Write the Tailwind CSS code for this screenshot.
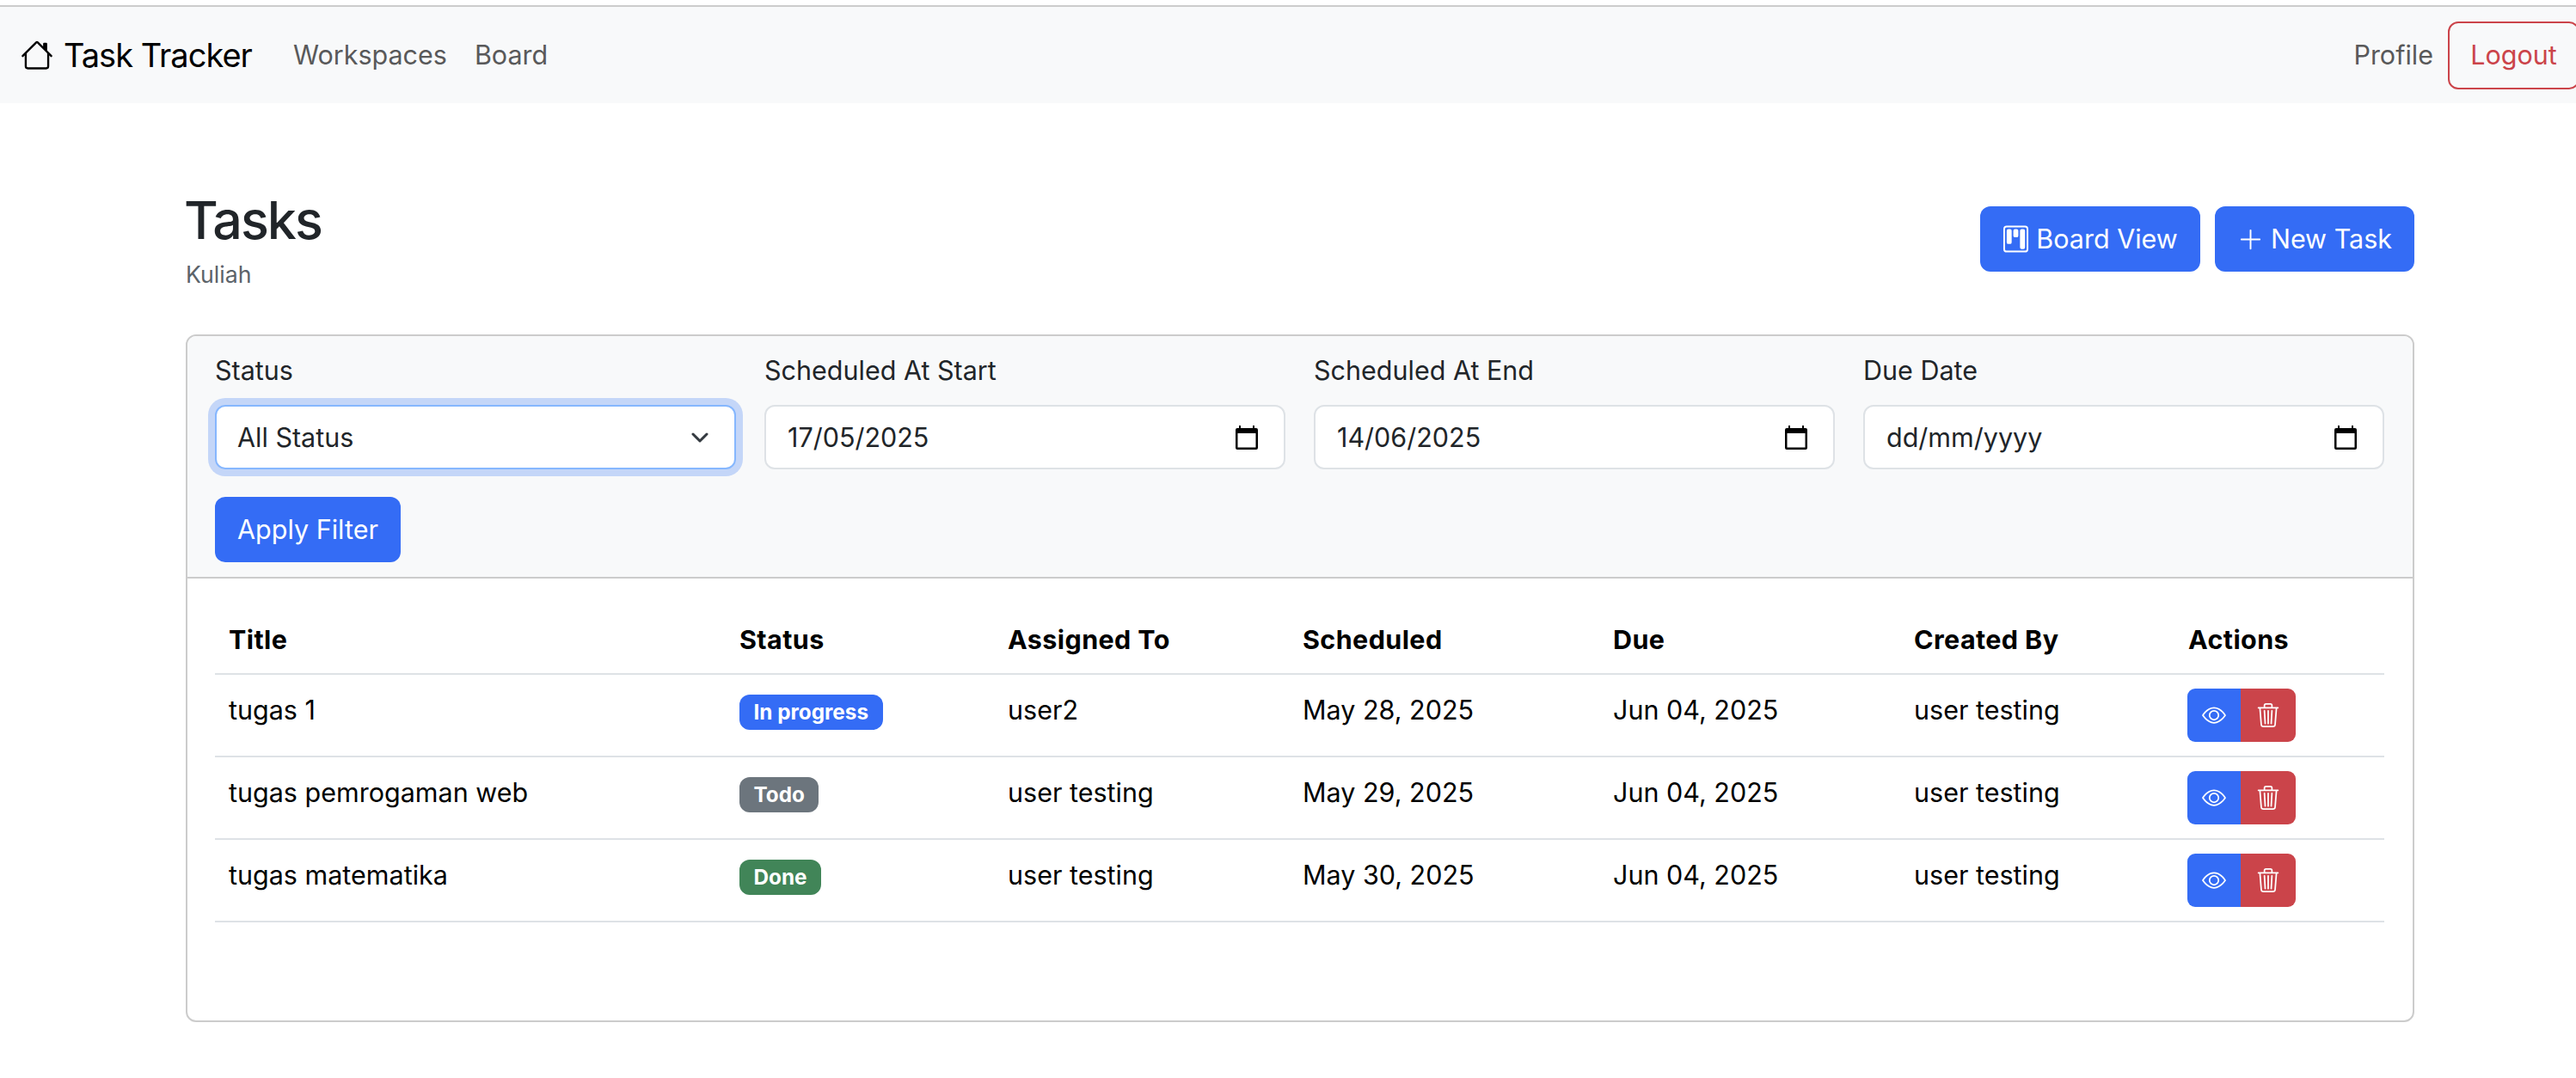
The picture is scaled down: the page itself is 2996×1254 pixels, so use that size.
<!DOCTYPE html>
<html lang="en">
<head>
    <meta charset="UTF-8">
    <title>Task Tracker</title>
    <script src="https://cdn.jsdelivr.net/npm/@tailwindcss/browser@4"></script>
</head>
<body class="bg-white text-[#212529] font-[Inter,sans-serif] text-[30.5px] leading-[46px] overflow-hidden w-[2996px] h-[1254px]">

    <!-- Navbar -->
    <nav class="mt-[6px] h-[114px] border-t-2 border-[#cccccc] bg-[#f8f9fa] flex items-center justify-between pl-[24px] mr-[-4px]">
        <div class="flex items-center">
            <a href="#" class="flex items-center gap-[12px] text-[38px] tracking-[-1px] text-black mr-[48px]">
                <svg class="w-[38px] h-[38px]" viewBox="0 0 16 16" fill="currentColor"><path d="M8.707 1.5a1 1 0 0 0-1.414 0L.646 8.146a.5.5 0 0 0 .708.708L2 8.207V13.5A1.5 1.5 0 0 0 3.5 15h9a1.5 1.5 0 0 0 1.5-1.5V8.207l.646.647a.5.5 0 0 0 .708-.708L13 5.793V2.5a.5.5 0 0 0-.5-.5h-1a.5.5 0 0 0-.5.5v1.293zM13 7.207V13.5a.5.5 0 0 1-.5.5h-9a.5.5 0 0 1-.5-.5V7.207l5-5z"/></svg>
                <span>Task Tracker</span>
            </a>
            <a href="#" class="text-[#59595a] mr-[32px]">Workspaces</a>
            <a href="#" class="text-[#59595a]">Board</a>
        </div>
        <div class="flex items-center gap-[17px]">
            <a href="#" class="text-[#59595a]">Profile</a>
            <button class="w-[153px] h-[79px] border-2 border-[#cb444a] rounded-[12px] text-[#cb444a]">Logout</button>
        </div>
    </nav>

    <main class="pl-[216px] pr-[188px] pt-[104px]">
        <!-- Page heading -->
        <div class="flex items-start justify-between h-[165px]">
            <div class="mt-[-4px]">
                <h1 class="text-[61px] leading-[73px] font-medium tracking-[-2px] ml-[-2px]">Tasks</h1>
                <p class="text-[26.7px] leading-[40px] text-[#5c636a] mt-[6px]">Kuliah</p>
            </div>
            <div class="flex gap-[17px] mt-[16px]">
                <button class="h-[76px] w-[256px] bg-[#346cf5] text-white rounded-[12px] flex items-center justify-center gap-[8px]">
                    <svg class="w-[31px] h-[32px]" viewBox="0 0 16 16" fill="currentColor"><path d="M13.5 1a1 1 0 0 1 1 1v12a1 1 0 0 1-1 1h-11a1 1 0 0 1-1-1V2a1 1 0 0 1 1-1zm-11-1a2 2 0 0 0-2 2v12a2 2 0 0 0 2 2h11a2 2 0 0 0 2-2V2a2 2 0 0 0-2-2z"/><path d="M6.5 3a1 1 0 0 1 1-1h1a1 1 0 0 1 1 1v3a1 1 0 0 1-1 1h-1a1 1 0 0 1-1-1zm-4 0a1 1 0 0 1 1-1h1a1 1 0 0 1 1 1v7a1 1 0 0 1-1 1h-1a1 1 0 0 1-1-1zm8 0a1 1 0 0 1 1-1h1a1 1 0 0 1 1 1v10a1 1 0 0 1-1 1h-1a1 1 0 0 1-1-1z"/></svg>
                    Board View
                </button>
                <button class="h-[76px] w-[232px] bg-[#346cf5] text-white rounded-[12px] flex items-center justify-center gap-[8px]">
                    <svg class="w-[31px] h-[31px]" viewBox="0 0 16 16" fill="currentColor"><path d="M8 2a.5.5 0 0 1 .5.5v5h5a.5.5 0 0 1 0 1h-5v5a.5.5 0 0 1-1 0v-5h-5a.5.5 0 0 1 0-1h5v-5A.5.5 0 0 1 8 2"/></svg>
                    New Task
                </button>
            </div>
        </div>

        <!-- Card -->
        <div class="h-[800px] border-2 border-[#cccccc] rounded-[12px] overflow-hidden">
            <!-- Filters -->
            <div class="h-[282px] bg-[#f8f9fa] border-b-2 border-[#cccccc] pl-[32px] pr-[33px] pt-[17px]">
                <div class="grid grid-cols-4 gap-[33px]">
                    <div>
                        <label class="block h-[46px] mb-[17px]">Status</label>
                        <div class="h-[75px] bg-white border-2 border-[#86b7fe] rounded-[12px] ring-8 ring-[#c4d6f8] flex items-center justify-between pl-[24px] pr-[30px]">
                            <span>All Status</span>
                            <svg class="w-[20px] h-[12px]" viewBox="0 0 20 12" fill="none" stroke="#343a40" stroke-width="3" stroke-linecap="round" stroke-linejoin="round"><path d="M2 2l8 8 8-8"/></svg>
                        </div>
                    </div>
                    <div>
                        <label class="block h-[46px] mb-[17px]">Scheduled At Start</label>
                        <div class="h-[75px] bg-white border-2 border-[#dee2e6] rounded-[12px] flex items-center justify-between pl-[25px] pr-[30px]">
                            <span>17/05/2025</span>
                            <svg class="w-[26px] h-[28px]" viewBox="0 0 26 28"><path d="M4 0h2v3h14V0h2v3h2a2 2 0 0 1 2 2v21a2 2 0 0 1-2 2H2a2 2 0 0 1-2-2V5a2 2 0 0 1 2-2h2zM2.500 9v16.500h21V9z"/></svg>
                        </div>
                    </div>
                    <div>
                        <label class="block h-[46px] mb-[17px]">Scheduled At End</label>
                        <div class="h-[75px] bg-white border-2 border-[#dee2e6] rounded-[12px] flex items-center justify-between pl-[25px] pr-[30px]">
                            <span>14/06/2025</span>
                            <svg class="w-[26px] h-[28px]" viewBox="0 0 26 28"><path d="M4 0h2v3h14V0h2v3h2a2 2 0 0 1 2 2v21a2 2 0 0 1-2 2H2a2 2 0 0 1-2-2V5a2 2 0 0 1 2-2h2zM2.500 9v16.500h21V9z"/></svg>
                        </div>
                    </div>
                    <div>
                        <label class="block h-[46px] mb-[17px]">Due Date</label>
                        <div class="h-[75px] bg-white border-2 border-[#dee2e6] rounded-[12px] flex items-center justify-between pl-[25px] pr-[30px]">
                            <span>dd/mm/yyyy</span>
                            <svg class="w-[26px] h-[28px]" viewBox="0 0 26 28"><path d="M4 0h2v3h14V0h2v3h2a2 2 0 0 1 2 2v21a2 2 0 0 1-2 2H2a2 2 0 0 1-2-2V5a2 2 0 0 1 2-2h2zM2.500 9v16.500h21V9z"/></svg>
                        </div>
                    </div>
                </div>
                <button class="mt-[32px] h-[76px] w-[216px] bg-[#346cf5] text-white rounded-[12px]">Apply Filter</button>
            </div>

            <!-- Tasks table -->
            <div class="pl-[32px] pr-[33px] pt-[32px]">
                <table class="w-full table-fixed text-left text-black">
                    <colgroup>
                        <col class="w-[594px]">
                        <col class="w-[312px]">
                        <col class="w-[343px]">
                        <col class="w-[361px]">
                        <col class="w-[350px]">
                        <col class="w-[319px]">
                        <col>
                    </colgroup>
                    <thead>
                        <tr class="h-[79px] border-b-2 border-[#dee2e6]">
                            <th class="pl-[16px] font-bold tracking-[0.4px]">Title</th>
                            <th class="pl-[16px] font-bold tracking-[0.4px]">Status</th>
                            <th class="pl-[16px] font-bold tracking-[0.4px]">Assigned To</th>
                            <th class="pl-[16px] font-bold tracking-[0.4px]">Scheduled</th>
                            <th class="pl-[16px] font-bold tracking-[0.4px]">Due</th>
                            <th class="pl-[16px] font-bold tracking-[0.4px]">Created By</th>
                            <th class="pl-[16px] font-bold tracking-[0.4px]">Actions</th>
                        </tr>
                    </thead>
                    <tbody>
                        <tr class="h-[96px] border-b-2 border-[#dee2e6]">
                            <td class="pl-[16px] pb-[12px]">tugas 1</td>
                            <td class="pl-[16px] pb-[2px]"><span class="inline-block h-[41px] px-[16.500px] rounded-[12px] bg-[#346cf5] text-white text-[24.300px] leading-[41px] font-bold align-top">In progress</span></td>
                            <td class="pl-[16px] pb-[12px]">user2</td>
                            <td class="pl-[16px] pb-[12px]">May 28, 2025</td>
                            <td class="pl-[16px] pb-[12px]">Jun 04, 2025</td>
                            <td class="pl-[16px] pb-[12px]">user testing</td>
                            <td class="pl-[15px]">
                                <div class="flex">
                                    <button class="w-[62px] h-[62px] bg-[#346cf5] text-white rounded-l-[9px] flex items-center justify-center">
                                        <svg class="w-[28px] h-[28px]" viewBox="0 0 16 16" fill="currentColor"><path d="M16 8s-3-5.500-8-5.500S0 8 0 8s3 5.500 8 5.500S16 8 16 8M1.173 8a13 13 0 0 1 1.660-2.043C4.120 4.668 5.880 3.500 8 3.500s3.879 1.168 5.168 2.457A13 13 0 0 1 14.828 8q-.086.130-.195.288c-.335.480-.830 1.120-1.465 1.755C11.879 11.332 10.119 12.500 8 12.500s-3.879-1.168-5.168-2.457A13 13 0 0 1 1.172 8z"/><path d="M8 5.500a2.500 2.500 0 1 0 0 5 2.500 2.500 0 0 0 0-5M4.500 8a3.500 3.500 0 1 1 7 0 3.500 3.500 0 0 1-7 0"/></svg>
                                    </button>
                                    <button class="w-[64px] h-[62px] bg-[#cb444a] text-white rounded-r-[9px] flex items-center justify-center">
                                        <svg class="w-[28px] h-[28px]" viewBox="0 0 16 16" fill="currentColor"><path d="M6.500 1h3a.5.5 0 0 1 .5.5v1H6v-1a.5.5 0 0 1 .5-.5M11 2.500v-1A1.500 1.500 0 0 0 9.500 0h-3A1.500 1.500 0 0 0 5 1.500v1H1.500a.5.5 0 0 0 0 1h.538l.853 10.660A2 2 0 0 0 4.885 16h6.230a2 2 0 0 0 1.994-1.840l.853-10.660h.538a.5.5 0 0 0 0-1zm1.958 1-.846 10.580a1 1 0 0 1-.997.920h-6.230a1 1 0 0 1-.997-.920L3.042 3.500zm-7.487 1a.5.5 0 0 1 .528.470l.5 8.500a.5.5 0 0 1-.998.060L5 5.030a.5.5 0 0 1 .470-.530Zm5.058 0a.5.5 0 0 1 .470.530l-.5 8.500a.5.5 0 1 1-.998-.060l.5-8.500a.5.5 0 0 1 .528-.470M8 4.500a.5.5 0 0 1 .5.5v8.500a.5.5 0 0 1-1 0V5a.5.5 0 0 1 .5-.5"/></svg>
                                    </button>
                                </div>
                            </td>
                        </tr>
                        <tr class="h-[96px] border-b-2 border-[#dee2e6]">
                            <td class="pl-[16px] pb-[12px]">tugas pemrogaman web</td>
                            <td class="pl-[16px] pb-[2px]"><span class="inline-block h-[41px] px-[16.500px] rounded-[12px] bg-[#6c757d] text-white text-[24.300px] leading-[41px] font-bold align-top">Todo</span></td>
                            <td class="pl-[16px] pb-[12px]">user testing</td>
                            <td class="pl-[16px] pb-[12px]">May 29, 2025</td>
                            <td class="pl-[16px] pb-[12px]">Jun 04, 2025</td>
                            <td class="pl-[16px] pb-[12px]">user testing</td>
                            <td class="pl-[15px]">
                                <div class="flex">
                                    <button class="w-[62px] h-[62px] bg-[#346cf5] text-white rounded-l-[9px] flex items-center justify-center">
                                        <svg class="w-[28px] h-[28px]" viewBox="0 0 16 16" fill="currentColor"><path d="M16 8s-3-5.500-8-5.500S0 8 0 8s3 5.500 8 5.500S16 8 16 8M1.173 8a13 13 0 0 1 1.660-2.043C4.120 4.668 5.880 3.500 8 3.500s3.879 1.168 5.168 2.457A13 13 0 0 1 14.828 8q-.086.130-.195.288c-.335.480-.830 1.120-1.465 1.755C11.879 11.332 10.119 12.500 8 12.500s-3.879-1.168-5.168-2.457A13 13 0 0 1 1.172 8z"/><path d="M8 5.500a2.500 2.500 0 1 0 0 5 2.500 2.500 0 0 0 0-5M4.500 8a3.500 3.500 0 1 1 7 0 3.500 3.500 0 0 1-7 0"/></svg>
                                    </button>
                                    <button class="w-[64px] h-[62px] bg-[#cb444a] text-white rounded-r-[9px] flex items-center justify-center">
                                        <svg class="w-[28px] h-[28px]" viewBox="0 0 16 16" fill="currentColor"><path d="M6.500 1h3a.5.5 0 0 1 .5.5v1H6v-1a.5.5 0 0 1 .5-.5M11 2.500v-1A1.500 1.500 0 0 0 9.500 0h-3A1.500 1.500 0 0 0 5 1.500v1H1.500a.5.5 0 0 0 0 1h.538l.853 10.660A2 2 0 0 0 4.885 16h6.230a2 2 0 0 0 1.994-1.840l.853-10.660h.538a.5.5 0 0 0 0-1zm1.958 1-.846 10.580a1 1 0 0 1-.997.920h-6.230a1 1 0 0 1-.997-.920L3.042 3.500zm-7.487 1a.5.5 0 0 1 .528.470l.5 8.500a.5.5 0 0 1-.998.060L5 5.030a.5.5 0 0 1 .470-.530Zm5.058 0a.5.5 0 0 1 .470.530l-.5 8.500a.5.5 0 1 1-.998-.060l.5-8.500a.5.5 0 0 1 .528-.470M8 4.500a.5.5 0 0 1 .5.5v8.500a.5.5 0 0 1-1 0V5a.5.5 0 0 1 .5-.5"/></svg>
                                    </button>
                                </div>
                            </td>
                        </tr>
                        <tr class="h-[96px] border-b-2 border-[#dee2e6]">
                            <td class="pl-[16px] pb-[12px]">tugas matematika</td>
                            <td class="pl-[16px] pb-[2px]"><span class="inline-block h-[41px] px-[16.500px] rounded-[12px] bg-[#418558] text-white text-[24.300px] leading-[41px] font-bold align-top">Done</span></td>
                            <td class="pl-[16px] pb-[12px]">user testing</td>
                            <td class="pl-[16px] pb-[12px]">May 30, 2025</td>
                            <td class="pl-[16px] pb-[12px]">Jun 04, 2025</td>
                            <td class="pl-[16px] pb-[12px]">user testing</td>
                            <td class="pl-[15px]">
                                <div class="flex">
                                    <button class="w-[62px] h-[62px] bg-[#346cf5] text-white rounded-l-[9px] flex items-center justify-center">
                                        <svg class="w-[28px] h-[28px]" viewBox="0 0 16 16" fill="currentColor"><path d="M16 8s-3-5.500-8-5.500S0 8 0 8s3 5.500 8 5.500S16 8 16 8M1.173 8a13 13 0 0 1 1.660-2.043C4.120 4.668 5.880 3.500 8 3.500s3.879 1.168 5.168 2.457A13 13 0 0 1 14.828 8q-.086.130-.195.288c-.335.480-.830 1.120-1.465 1.755C11.879 11.332 10.119 12.500 8 12.500s-3.879-1.168-5.168-2.457A13 13 0 0 1 1.172 8z"/><path d="M8 5.500a2.500 2.500 0 1 0 0 5 2.500 2.500 0 0 0 0-5M4.500 8a3.500 3.500 0 1 1 7 0 3.500 3.500 0 0 1-7 0"/></svg>
                                    </button>
                                    <button class="w-[64px] h-[62px] bg-[#cb444a] text-white rounded-r-[9px] flex items-center justify-center">
                                        <svg class="w-[28px] h-[28px]" viewBox="0 0 16 16" fill="currentColor"><path d="M6.500 1h3a.5.5 0 0 1 .5.5v1H6v-1a.5.5 0 0 1 .5-.5M11 2.500v-1A1.500 1.500 0 0 0 9.500 0h-3A1.500 1.500 0 0 0 5 1.500v1H1.500a.5.5 0 0 0 0 1h.538l.853 10.660A2 2 0 0 0 4.885 16h6.230a2 2 0 0 0 1.994-1.840l.853-10.660h.538a.5.5 0 0 0 0-1zm1.958 1-.846 10.580a1 1 0 0 1-.997.920h-6.230a1 1 0 0 1-.997-.920L3.042 3.500zm-7.487 1a.5.5 0 0 1 .528.470l.5 8.500a.5.5 0 0 1-.998.060L5 5.030a.5.5 0 0 1 .470-.530Zm5.058 0a.5.5 0 0 1 .470.530l-.5 8.500a.5.5 0 1 1-.998-.060l.5-8.500a.5.5 0 0 1 .528-.470M8 4.500a.5.5 0 0 1 .5.5v8.500a.5.5 0 0 1-1 0V5a.5.5 0 0 1 .5-.5"/></svg>
                                    </button>
                                </div>
                            </td>
                        </tr>
                    </tbody>
                </table>
            </div>
        </div>
    </main>
</body>
</html>
